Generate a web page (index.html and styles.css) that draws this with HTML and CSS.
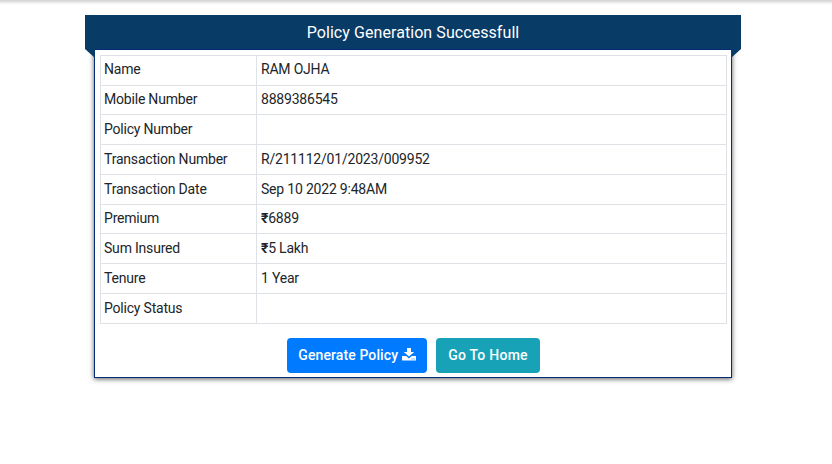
FILE: index.html
```html
<!DOCTYPE html>
<html lang="en">
<head>
<meta charset="utf-8">
<title>Policy Generation</title>
<link rel="stylesheet" href="styles.css">
</head>
<body>
<div class="navbar-edge"></div>
<main class="panel">
  <h1 class="ribbon">Policy Generation Successfull</h1>
  <section class="card">
    <dl class="details">
      <dt>Name</dt><dd>RAM OJHA</dd>
      <dt>Mobile Number</dt><dd>8889386545</dd>
      <dt>Policy Number</dt><dd></dd>
      <dt>Transaction Number</dt><dd>R/211112/01/2023/009952</dd>
      <dt>Transaction Date</dt><dd>Sep 10 2022 9:48AM</dd>
      <dt>Premium</dt><dd><span class="currency">₹</span>6889</dd>
      <dt>Sum Insured</dt><dd><span class="currency">₹</span>5 Lakh</dd>
      <dt>Tenure</dt><dd>1 Year</dd>
      <dt>Policy Status</dt><dd></dd>
    </dl>
    <div class="actions">
      <button class="btn primary">Generate Policy <svg class="icon" viewBox="0 0 14 13" aria-hidden="true"><path fill="currentColor" fill-rule="evenodd" d="M5 0h4v4h3.200L7 8.600 1.800 4H5zM.6 8h3.600L7 10.400 9.800 8h3.600q.6 0 .6.600v3.400q0 .6-.6.600H.6q-.6 0-.6-.6V8.600Q0 8 .6 8zM9.500 10.500v1h1v-1zm2 0v1h1v-1z"/></svg></button>
      <button class="btn info">Go To Home</button>
    </div>
  </section>
</main>
</body>
</html>
```
FILE: styles.css
```css
* { box-sizing: border-box; }
body {
  min-height: 464px;
  margin: 0;
  background: #fff;
  color: #212529;
  font: 400 14px/21px Roboto, sans-serif;
}
.navbar-edge {
  height: 5px;
  background: linear-gradient(#d5d5d5, #d9d9d9 20%, #f0f0f0 60%, #fff);
}
.panel { width: 656px; margin: 10px 0 0 85px; }
.ribbon {
  position: relative;
  height: 34px;
  margin: 0;
  background: #083b66;
  color: #fff;
  font-size: 16px;
  font-weight: 400;
  letter-spacing: .07px;
  line-height: 35px;
  text-align: center;
}
.ribbon::before,
.ribbon::after {
  content: "";
  position: absolute;
  top: 34px;
  width: 10px;
  height: 9px;
  background: #083b66;
}
.ribbon::before { left: 0; clip-path: polygon(0 0, 100% 0, 100% 100%); }
.ribbon::after { right: 0; clip-path: polygon(0 0, 100% 0, 0 100%); }
.card {
  width: 638px;
  height: 329px;
  margin: 0 9px;
  padding: 4.9px 4px 0 5px;
  border: 1px solid #062c78;
  background: #fff;
  box-shadow: 0 1px 5px rgba(0, 0, 0, .65);
}
.details {
  display: grid;
  grid-template-columns: 156px 1fr;
  grid-auto-rows: 29.75px;
  width: 627px;
  margin: 0;
  border-left: 1px solid #dee2e6;
  border-bottom: 1px solid #dee2e6;
  letter-spacing: -.2px;
}
.details dt,
.details dd {
  margin: 0;
  padding: 3.68px 3px 0;
  border-top: 1px solid #dee2e6;
  border-right: 1px solid #dee2e6;
}
.details dd { padding-left: 4px; }
.details dt:first-of-type,
.details dd:first-of-type { padding-top: 3.5px; }
.currency { font-weight: 700; }
.actions {
  display: flex;
  justify-content: center;
  gap: 9px;
  margin-top: 14px;
}
.btn {
  display: flex;
  align-items: center;
  justify-content: center;
  height: 35px;
  padding: 0;
  border: 0;
  border-radius: 4px;
  color: #fff;
  font: 500 14px/21px Roboto, sans-serif;
  letter-spacing: .1px;
  white-space: pre;
}
.primary { width: 140px; background: #007bff; }
.info { width: 104px; background: #17a2b8; letter-spacing: .25px; }
.icon { width: 14px; height: 13px; margin-top: -2px; }
```
